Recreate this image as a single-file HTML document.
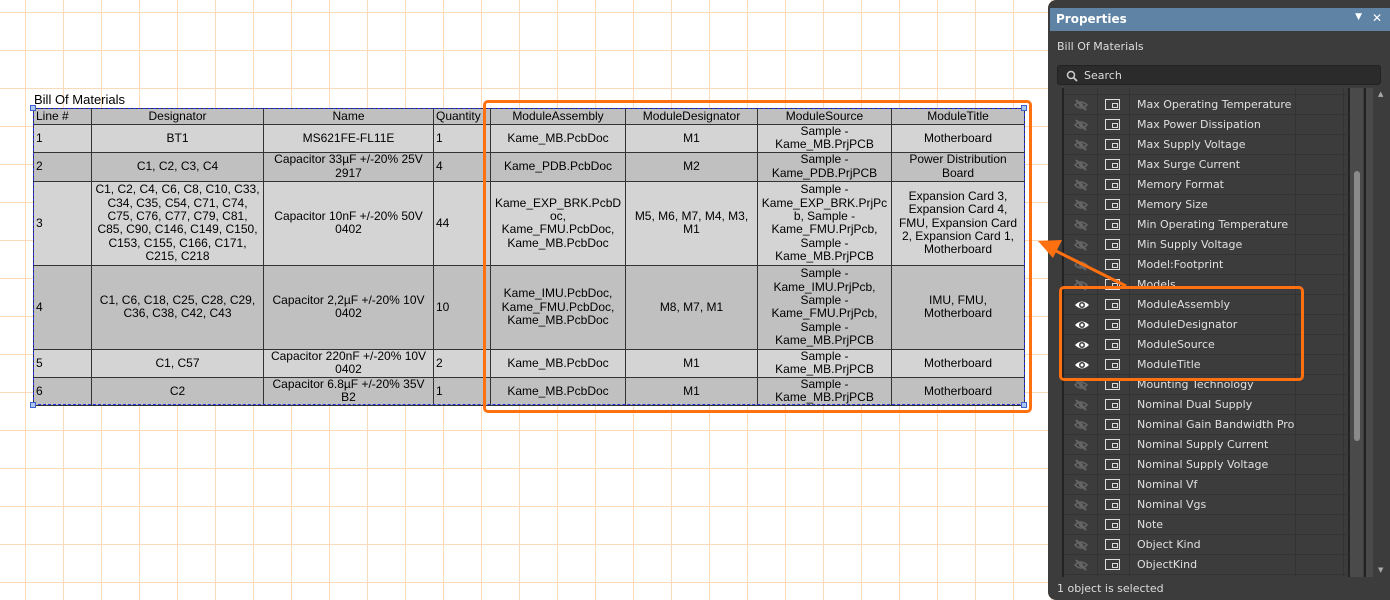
<!DOCTYPE html>
<html><head><meta charset="utf-8"><style>
*{margin:0;padding:0;box-sizing:border-box}
body{width:1390px;height:600px;overflow:hidden;position:relative;background:#fff;
background-image:linear-gradient(to right,#fcd9b8 1px,transparent 1px),linear-gradient(to bottom,#fcd9b8 1px,transparent 1px);
background-size:38px 38px;background-position:25px 12px;font-family:"Liberation Sans",Arial,sans-serif}
.t{position:absolute;left:33px;top:108px;border-collapse:collapse;font-size:12px;color:#000;table-layout:fixed}
.t td{border:1px solid #333;text-align:center;line-height:13.4px;padding:0 1px;vertical-align:middle;overflow:hidden}
.t td.l{text-align:left;padding-left:2px}
.t tr.d td{background:#c0c0c0}.t tr.w td{background:#d4d4d4}
.sel{position:absolute;left:33px;top:108px;width:992px;height:297px;border:1px dashed #2030e0}
.h{position:absolute;width:6px;height:6px;background:#a8c8f0;border:1px solid #4060d0}
.o{position:absolute;border:3px solid #ff7010;border-radius:5px}
.p{position:absolute;left:1048px;top:0;width:350px;height:600px;background:#3c3c3c;border-radius:8px;color:#ddd;font-family:"DejaVu Sans","Liberation Sans",sans-serif;font-size:11px}
.row{position:absolute;left:1064px;width:285px;height:20px;border-bottom:1px solid #333;font-family:"DejaVu Sans","Liberation Sans",sans-serif;font-size:11px}
.row span{position:absolute;left:73px;top:3px;color:#e0e0e0}
.eye{position:absolute;left:10px;top:3px}
.ic{position:absolute;left:41px;top:4px;width:15px;height:11px;border:1.5px solid #ddd}
.ic:after{content:"";position:absolute;right:1px;bottom:1px;width:4px;height:3px;border:1px solid #ddd}
</style></head><body>
<div style="position:absolute;left:34px;top:92px;font-size:13px">Bill Of Materials</div>
<table class="t">
<colgroup><col style="width:58px"><col style="width:172px"><col style="width:170px"><col style="width:57px"><col style="width:135px"><col style="width:132px"><col style="width:134px"><col style="width:133px"></colgroup>
<tr class="d" style="height:16px"><td class="l">Line #</td><td>Designator</td><td>Name</td><td class="l">Quantity</td><td>ModuleAssembly</td><td>ModuleDesignator</td><td>ModuleSource</td><td>ModuleTitle</td></tr>
<tr class="w" style="height:27px"><td class="l">1</td><td>BT1</td><td>MS621FE-FL11E</td><td class="l">1</td><td>Kame_MB.PcbDoc</td><td>M1</td><td>Sample -<br>Kame_MB.PrjPCB</td><td>Motherboard</td></tr>
<tr class="d" style="height:29px"><td class="l">2</td><td>C1, C2, C3, C4</td><td>Capacitor 33µF +/-20% 25V<br>2917</td><td class="l">4</td><td>Kame_PDB.PcbDoc</td><td>M2</td><td>Sample -<br>Kame_PDB.PrjPCB</td><td>Power Distribution<br>Board</td></tr>
<tr class="w" style="height:84px"><td class="l">3</td><td>C1, C2, C4, C6, C8, C10, C33,<br>C34, C35, C54, C71, C74,<br>C75, C76, C77, C79, C81,<br>C85, C90, C146, C149, C150,<br>C153, C155, C166, C171,<br>C215, C218</td><td>Capacitor 10nF +/-20% 50V<br>0402</td><td class="l">44</td><td>Kame_EXP_BRK.PcbD<br>oc,<br>Kame_FMU.PcbDoc,<br>Kame_MB.PcbDoc</td><td>M5, M6, M7, M4, M3,<br>M1</td><td>Sample -<br>Kame_EXP_BRK.PrjPc<br>b, Sample -<br>Kame_FMU.PrjPcb,<br>Sample -<br>Kame_MB.PrjPCB</td><td>Expansion Card 3,<br>Expansion Card 4,<br>FMU, Expansion Card<br>2, Expansion Card 1,<br>Motherboard</td></tr>
<tr class="d" style="height:84px"><td class="l">4</td><td>C1, C6, C18, C25, C28, C29,<br>C36, C38, C42, C43</td><td>Capacitor 2,2µF +/-20% 10V<br>0402</td><td class="l">10</td><td>Kame_IMU.PcbDoc,<br>Kame_FMU.PcbDoc,<br>Kame_MB.PcbDoc</td><td>M8, M7, M1</td><td>Sample -<br>Kame_IMU.PrjPcb,<br>Sample -<br>Kame_FMU.PrjPcb,<br>Sample -<br>Kame_MB.PrjPCB</td><td>IMU, FMU,<br>Motherboard</td></tr>
<tr class="w" style="height:28px"><td class="l">5</td><td>C1, C57</td><td>Capacitor 220nF +/-20% 10V<br>0402</td><td class="l">2</td><td>Kame_MB.PcbDoc</td><td>M1</td><td>Sample -<br>Kame_MB.PrjPCB</td><td>Motherboard</td></tr>
<tr class="d" style="height:28px"><td class="l">6</td><td>C2</td><td>Capacitor 6.8µF +/-20% 35V<br>B2</td><td class="l">1</td><td>Kame_MB.PcbDoc</td><td>M1</td><td>Sample -<br>Kame_MB.PrjPCB</td><td>Motherboard</td></tr>
</table>
<div class="sel"></div>
<div class="h" style="left:30px;top:105px"></div><div class="h" style="left:30px;top:402px"></div><div class="h" style="left:1021px;top:105px"></div><div class="h" style="left:1021px;top:402px"></div>
<div class="o" style="left:483px;top:100px;width:549px;height:313px"></div>
<div class="p">
<div style="position:absolute;left:2px;top:8px;width:342px;height:23px;background:#5f83a4;color:#fff;font-weight:bold;font-size:12px;padding:4px 6px">Properties<span style="position:absolute;right:30px;top:4px;font-size:9px">▼</span><span style="position:absolute;right:10px;top:3px">✕</span></div>
<div style="position:absolute;left:9px;top:40px">Bill Of Materials</div>
<div style="position:absolute;left:9px;top:65px;width:324px;height:20px;background:#2b2b2b;border:1px solid #222;border-radius:3px;padding:3px 0 0 26px">Search
<svg style="position:absolute;left:8px;top:4px" width="12" height="12"><circle cx="5" cy="5" r="3.5" stroke="#ccc" stroke-width="1.5" fill="none"/><line x1="7.5" y1="7.5" x2="11" y2="11" stroke="#ccc" stroke-width="1.8"/></svg></div>
<div style="position:absolute;left:14px;top:88px;width:288px;height:489px;border-left:2px solid #222;border-right:2px solid #222"></div>
<div style="position:absolute;left:302px;top:88px;width:13px;height:489px;background:#4a4a4a"></div>
<div style="position:absolute;left:306px;top:171px;width:6px;height:270px;background:#8a8a8a;border-radius:3px"></div>
<div style="position:absolute;left:316px;top:88px;width:2px;height:489px;background:#222"></div>
<div style="position:absolute;left:318px;top:88px;width:7px;height:489px;background:#4a4a4a"></div>
<div style="position:absolute;left:330px;top:90px;font-size:7px;color:#aaa">▲</div>
<div style="position:absolute;left:330px;top:566px;font-size:7px;color:#aaa">▼</div>
<div style="position:absolute;left:9px;top:582px">1 object is selected</div>
</div>
<div id="rows"></div>
<script>
var n=["Max Operating Temperature","Max Power Dissipation","Max Supply Voltage","Max Surge Current","Memory Format","Memory Size","Min Operating Temperature","Min Supply Voltage","Model:Footprint","Models","ModuleAssembly","ModuleDesignator","ModuleSource","ModuleTitle","Mounting Technology","Nominal Dual Supply","Nominal Gain Bandwidth Pro","Nominal Supply Current","Nominal Supply Voltage","Nominal Vf","Nominal Vgs","Note","Object Kind","ObjectKind"];
var h='<div class="row" style="top:75px"></div>';
var off='<svg class="eye" width="14" height="14"><path d="M1 7 Q7 1 13 7 Q7 13 1 7Z" fill="none" stroke="#666" stroke-width="1.5"/><circle cx="7" cy="7" r="2" fill="#666"/><line x1="2" y1="2" x2="12" y2="12" stroke="#666" stroke-width="2"/></svg>';
var on='<svg class="eye" width="16" height="14"><path d="M1 7 Q8 0 15 7 Q8 14 1 7Z" fill="#fff"/><circle cx="8" cy="7" r="3" fill="#3c3c3c"/><circle cx="8" cy="7" r="1.5" fill="#fff"/></svg>';
n.forEach(function(s,i){var y=95+i*20;h+='<div class="row" style="top:'+y+'px">'+(i>=10&&i<=13?on:off)+'<div class="ic"></div><span>'+s+'</span></div>'});
h+='<div style="position:absolute;left:1097px;top:88px;width:33px;height:489px;border-left:1px solid #333;border-right:1px solid #333"></div><div style="position:absolute;left:1295px;top:88px;width:1px;height:489px;background:#333"></div><div style="position:absolute;left:1343px;top:88px;width:1px;height:489px;background:#333"></div>';
document.getElementById('rows').innerHTML=h;
</script>
<div class="o" style="left:1059px;top:286px;width:245px;height:95px"></div>
<svg style="position:absolute;left:0;top:0" width="1390" height="600"><line x1="1126" y1="286" x2="1052" y2="249" stroke="#ff7010" stroke-width="3"/><polygon points="1038,241 1062,240 1053,258" fill="#ff7010"/></svg>
</body></html>
